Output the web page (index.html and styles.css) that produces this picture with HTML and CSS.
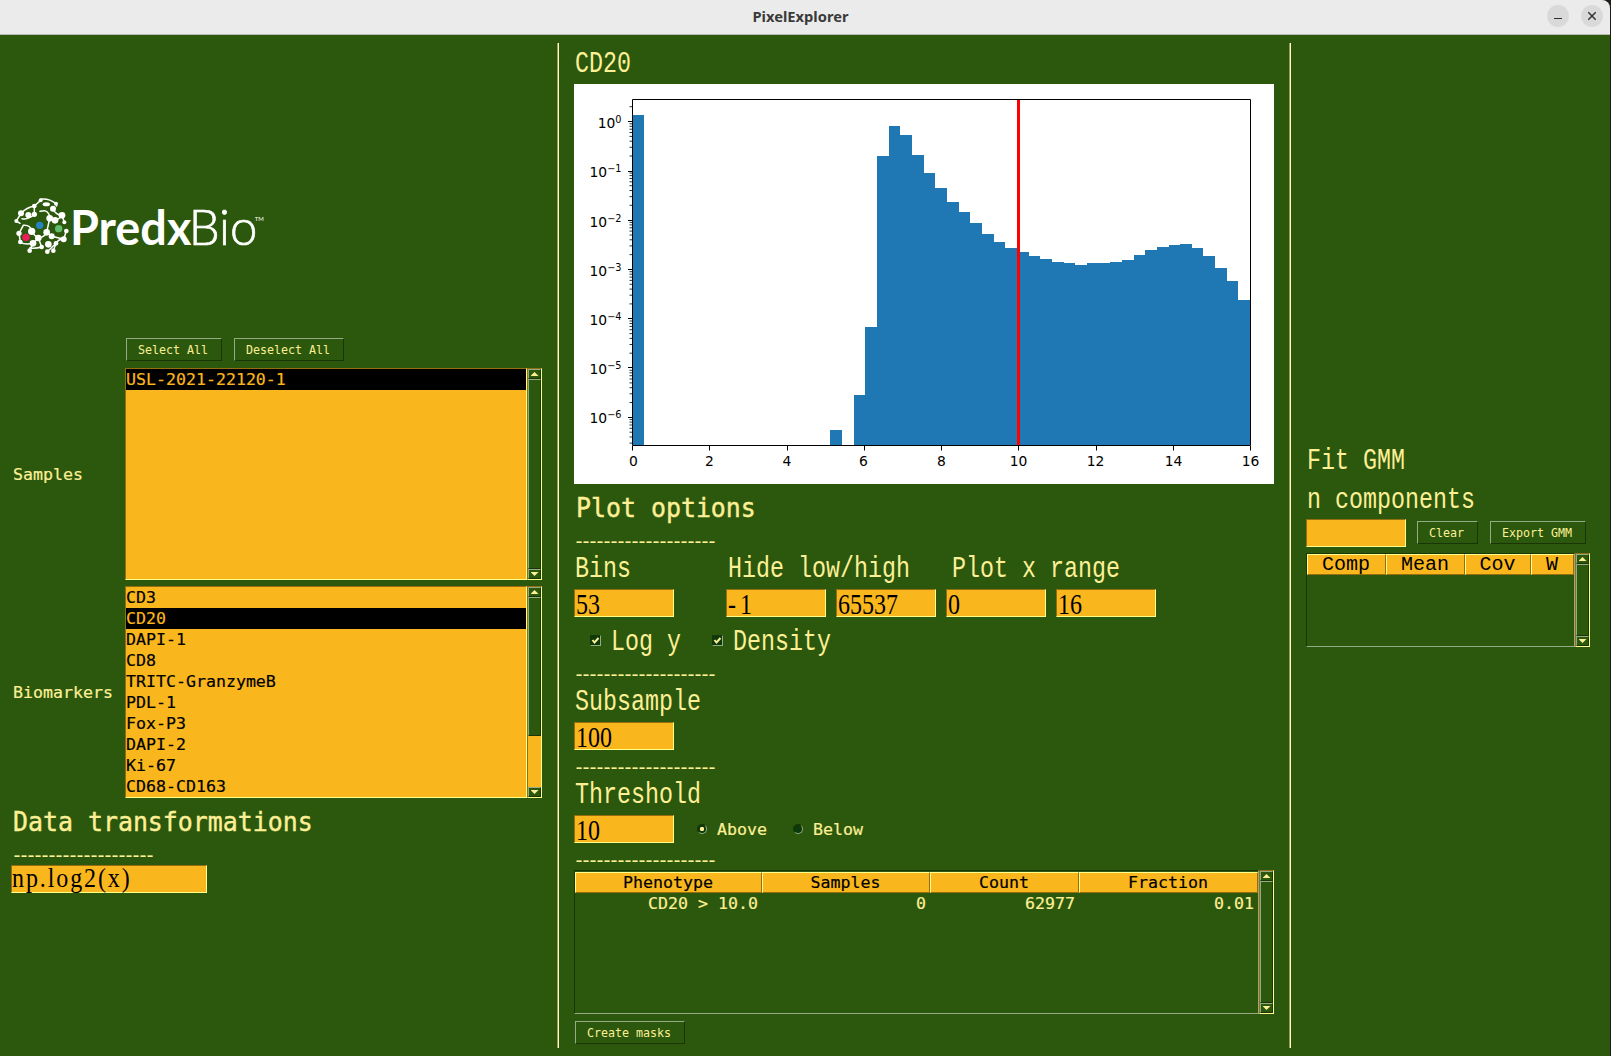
FILE: index.html
```html
<!DOCTYPE html>
<html lang="en">
<head>
<meta charset="utf-8">
<title>PixelExplorer</title>
<link rel="stylesheet" href="styles.css">
</head>
<body>
<div class="window">
  <header class="titlebar">
    <span class="caption">PixelExplorer</span>
    <div class="controls">
      <svg width="22" height="22" viewBox="0 0 22 22"><circle cx="11" cy="11" r="11" fill="#d9d9d9"/><path d="M7 13.5h8" stroke="#2e2e2e" fill="none"/></svg>
      <svg width="22" height="22" viewBox="0 0 22 22"><circle cx="11" cy="11" r="11" fill="#d9d9d9"/><path d="M7.3 7.3l7.4 7.4M14.7 7.3l-7.4 7.4" stroke="#2e2e2e" stroke-width="1.4" fill="none"/></svg>
    </div>
  </header>
  <main class="content">
    <section class="panel left">
      <svg class="logo" width="260" height="90" viewBox="33 0 780 270">
        <g fill="none" stroke="#fff" stroke-width="4.500" stroke-linecap="round">
          <path d="M103 78L122 61M122 58Q145 54 168 71M168 71L170 78M103 78Q80 82 63 100L49 123M103 78L103 103M159 86Q166 104 186 106L193 127M149 115Q150 98 134 92L120 94M149 115Q156 124 165 121Q180 116 186 106M95 154Q92 134 70 136L57 160M49 123L60 130M103 103Q86 120 66 116M57 160L61 186Q74 196 99 190L115 174M95 154Q104 168 115 174Q134 172 140 157Q144 138 149 115M199 153L191 178Q176 176 168 190L160 212M155 169L140 157M155 169Q168 172 191 178M99 190L89 212M115 174L125 201M125 201Q108 206 89 204M168 190L142 215"/>
        </g>
        <g fill="#fff">
          <circle cx="122" cy="61" r="6"/><ellipse cx="139" cy="73" rx="11" ry="6"/><circle cx="168" cy="71" r="6"/><circle cx="103" cy="78" r="7"/>
          <circle cx="159" cy="86" r="9"/><circle cx="186" cy="106" r="10"/><circle cx="63" cy="100" r="9"/><circle cx="85" cy="105" r="9"/>
          <circle cx="49" cy="123" r="6"/><circle cx="103" cy="103" r="8"/><circle cx="149" cy="115" r="10"/><circle cx="165" cy="121" r="10"/><circle cx="193" cy="127" r="6"/>
          <circle cx="95" cy="154" r="11"/><circle cx="57" cy="160" r="8"/><circle cx="140" cy="157" r="10"/><circle cx="199" cy="153" r="7"/>
          <circle cx="155" cy="169" r="9"/><circle cx="115" cy="174" r="10"/><circle cx="191" cy="178" r="9"/><circle cx="61" cy="186" r="7"/>
          <circle cx="99" cy="190" r="10"/><circle cx="145" cy="193" r="10"/><circle cx="168" cy="190" r="7"/><circle cx="89" cy="212" r="7"/>
          <circle cx="125" cy="201" r="7"/><circle cx="160" cy="212" r="7"/><circle cx="142" cy="215" r="7"/>
        </g>
        <circle cx="119" cy="136" r="11" fill="#2484c6"/>
        <circle cx="176" cy="146" r="11" fill="#62bd6d"/>
        <circle cx="78" cy="172" r="11" fill="#ed1c5b"/>
        <text class="logo-bold" x="210" y="196" textLength="364" lengthAdjust="spacingAndGlyphs">Predx</text>
        <text class="logo-light" x="566" y="196" textLength="206" lengthAdjust="spacingAndGlyphs">Bio</text>
        <text class="logo-tm" x="764" y="124">TM</text>
      </svg>
      <div class="select-row">
        <button class="btn w96">Select All</button>
        <button class="btn w110">Deselect All</button>
      </div>
      <div class="list-row">
        <span class="label">Samples</span>
        <ul class="listbox"><li class="on">USL-2021-22120-1</li></ul>
        <div class="scroll"><i class="up"></i><b class="full"></b><i class="down"></i></div>
      </div>
      <div class="list-row second">
        <span class="label">Biomarkers</span>
        <ul class="listbox">
          <li>CD3</li><li class="on">CD20</li><li>DAPI-1</li><li>CD8</li><li>TRITC-GranzymeB</li>
          <li>PDL-1</li><li>Fox-P3</li><li>DAPI-2</li><li>Ki-67</li><li>CD68-CD163</li>
        </ul>
        <div class="scroll"><i class="up"></i><b class="part"></b><i class="down"></i></div>
      </div>
      <h2 class="title data">Data transformations</h2>
      <div class="dashes data-dash">--------------------</div>
      <div class="entry formula"><span>np.log2(x)</span></div>
    </section>

    <div class="vsep"></div>

    <section class="panel center">
      <div class="big plot-name">CD20</div>
      <svg class="plot" width="700" height="400" viewBox="0 0 700 400">
        <rect width="700" height="400" fill="#fff"/>
        <path shape-rendering="crispEdges" fill="#1f77b4" d="M59 361V31H70V361ZM256 361V346H268V361ZM280 361V311H291V243H303V72H315V42H326V51H338V71H350V89H361V104H373V118H385V128H396V139H408V150H420V158H431V164H443V168H455V172H466V175H478V178H490V179H501V181H513V179H536V178H548V176H560V171H571V166H583V163H595V161H606V160H618V164H629V172H641V184H653V197H664V216H676V361Z"/>
        <path d="M444.5 16V361" stroke="#f00" stroke-width="3" shape-rendering="crispEdges"/>
        <path stroke="#000" fill="none" d="M58.5 15.5H676.5V361.5H58.5ZM58.5 362v4.500M135.500 362v4.500M213.500 362v4.500M290.500 362v4.500M367.500 362v4.500M444.500 362v4.500M522.500 362v4.500M599.500 362v4.500M676.500 362v4.500M54 37.500h4.500M54 87.500h4.500M54 136.500h4.500M54 185.500h4.500M54 234.500h4.500M54 283.500h4.500M54 333.500h4.500"/>
        <path id="minor" stroke="#000" stroke-width=".8" fill="none" d="M55.500 39.800h3M55.500 42.300h3M55.500 45.200h3M55.500 48.500h3M55.500 52.400h3M55.500 57.200h3M55.500 63.300h3M55.500 72h3"/>
        <use href="#minor" y="49.300"/><use href="#minor" y="98.600"/><use href="#minor" y="147.900"/><use href="#minor" y="197.200"/><use href="#minor" y="246.500"/>
        <path stroke="#000" stroke-width=".8" d="M55.500 22.700h3M55.500 335.600h3M55.500 338.100h3M55.500 341h3M55.500 344.300h3M55.500 348.200h3M55.500 353h3M55.500 359.100h3"/>
        <g class="xt">
          <text x="59.500" y="382">0</text><text x="135.500" y="382">2</text><text x="213" y="382">4</text><text x="289.500" y="382">6</text><text x="367.500" y="382">8</text><text x="444.500" y="382">10</text><text x="521.500" y="382">12</text><text x="599.500" y="382">14</text><text x="676.500" y="382">16</text>
        </g>
        <g class="yt">
          <text x="47.500" y="44">10<tspan class="sup" dy="-5.500">0</tspan></text>
          <text x="47.500" y="93">10<tspan class="sup" dy="-5.500">−1</tspan></text>
          <text x="47.500" y="143">10<tspan class="sup" dy="-5.500">−2</tspan></text>
          <text x="47.500" y="192">10<tspan class="sup" dy="-5.500">−3</tspan></text>
          <text x="47.500" y="241">10<tspan class="sup" dy="-5.500">−4</tspan></text>
          <text x="47.500" y="290">10<tspan class="sup" dy="-5.500">−5</tspan></text>
          <text x="47.500" y="339">10<tspan class="sup" dy="-5.500">−6</tspan></text>
        </g>
      </svg>
      <h2 class="title options">Plot options</h2>
      <div class="dashes first">--------------------</div>
      <div class="labels"><span class="big c1">Bins</span><span class="big c2">Hide low/high</span><span class="big">Plot x range</span></div>
      <div class="entries">
        <div class="entry gap"><span>53</span></div><div class="entry minus"><span>-1</span></div><div class="entry"><span>65537</span></div><div class="entry"><span>0</span></div><div class="entry"><span>16</span></div>
      </div>
      <div class="checks">
        <span class="check"><svg width="11" height="11" viewBox="0 0 11 11"><path d="M2.500 5l2 2.500L8.500 3" fill="none" stroke="#fdef96" stroke-width="2"/></svg></span><span class="big logy">Log y</span>
        <span class="check"><svg width="11" height="11" viewBox="0 0 11 11"><path d="M2.500 5l2 2.500L8.500 3" fill="none" stroke="#fdef96" stroke-width="2"/></svg></span><span class="big">Density</span>
      </div>
      <div class="dashes">--------------------</div>
      <div class="big field">Subsample</div>
      <div class="entry"><span>100</span></div>
      <div class="dashes">--------------------</div>
      <div class="big field">Threshold</div>
      <div class="threshold">
        <div class="entry"><span>10</span></div>
        <span class="radio picked"></span><span class="label above">Above</span>
        <span class="radio"></span><span class="label">Below</span>
      </div>
      <div class="dashes">--------------------</div>
      <div class="table-wrap pheno">
        <div class="table">
          <div class="row head"><span>Phenotype</span><span>Samples</span><span>Count</span><span>Fraction</span></div>
          <div class="row"><span>CD20 &gt; 10.0</span><span>0</span><span>62977</span><span>0.01</span></div>
        </div>
        <div class="scroll"><i class="up"></i><b class="full"></b><i class="down"></i></div>
      </div>
      <button class="btn w110 masks">Create masks</button>
    </section>

    <div class="vsep"></div>

    <section class="panel right">
      <div class="big fit">Fit GMM</div>
      <div class="big ncomp">n components</div>
      <div class="gmm-row">
        <div class="entry"></div>
        <button class="btn w61">Clear</button>
        <button class="btn w96">Export GMM</button>
      </div>
      <div class="table-wrap gmm">
        <div class="table">
          <div class="row head"><span>Comp</span><span>Mean</span><span>Cov</span><span>W</span></div>
        </div>
        <div class="scroll"><i class="up"></i><b class="full"></b><i class="down"></i></div>
      </div>
    </section>
  </main>
</div>
</body>
</html>
```
FILE: styles.css
```css
* { box-sizing: border-box; }
:root {
  --green: #2b580c;
  --amber: #f9b71d;
  --cream: #fdef96;
  --amber-dark: #956e11;
  --amber-light: #ffff8c;
  --green-dark: #1a3507;
  --green-light: #95ab85;
}
body {
  margin: 0;
  width: 1611px;
  height: 1056px;
  overflow: hidden;
  background: #1c1c1c;
  color: var(--cream);
}
.window { width: 1610px; height: 1056px; display: flex; flex-direction: column; background: var(--green); border-top-right-radius: 8px; overflow: hidden; }

.titlebar { height: 35px; flex: none; display: flex; align-items: center; justify-content: flex-end; background: #ebebeb; border-bottom: 1px solid #b9b9b4; }
.caption { flex: 1; padding: 0 0 2px 124px; text-align: center; font: bold 14.700px/32px "Noto Sans", sans-serif; color: #3a3a3a; }
.controls { width: 133px; padding-right: 7px; display: flex; gap: 12px; justify-content: flex-end; margin-bottom: 2px; }
.controls svg { display: block; }

.content { flex: 1; display: flex; }
.panel { display: flex; flex-direction: column; align-items: flex-start; flex: none; }
.left { width: 557px; padding: 145px 0 0 11px; }
.center { width: 730px; padding: 14px 0 0 15px; }
.right { flex: 1; padding: 411px 0 0 15px; }
.vsep { width: 2px; flex: none; height: 1005px; margin-top: 8px; border-left: 1px solid #a09a55; background: #ffffc8; }

.big { display: block; height: 30px; padding-left: 1px; font: 23.330px/30px "Liberation Mono", monospace; white-space: pre; transform: scaleY(1.28); }
.title { margin: 0; height: 30px; font: 24.900px/33px "DejaVu Sans Mono", monospace; white-space: pre; -webkit-text-stroke: .4px; transform: scaleY(1.1); }
.label { font: 16.600px/21px "DejaVu Sans Mono", monospace; white-space: pre; -webkit-text-stroke: .2px; }
.dashes { height: 16px; margin: 9px 0 0 -1px; font: 20px/17px "DejaVu Sans Mono", monospace; letter-spacing: -5.040px; white-space: pre; }

.btn { height: 23px; padding: 0 2px 0 0; border: 1px solid; border-color: var(--green-light) var(--green-dark) var(--green-dark) var(--green-light); background: var(--green); color: var(--cream); font: 11.670px/20px "DejaVu Sans Mono", monospace; text-align: center; white-space: pre; }
.w61 { width: 61px; }
.w96 { width: 96px; }
.w110 { width: 110px; }

.entry { width: 100px; height: 28px; flex: none; padding-left: 1px; border: 1px solid; border-color: var(--amber-dark) var(--amber-light) var(--amber-light) var(--amber-dark); background: var(--amber); color: #000; font: 24px/26px "Liberation Serif", serif; white-space: pre; }
.entry span { display: block; transform: scaleY(1.25); transform-origin: 50% 38%; }
.entry.minus { letter-spacing: 4px; }
.formula { width: 196px; margin-top: 2px; padding-left: 0; letter-spacing: 1.900px; line-height: 24px; }
.formula span { transform: scaleY(1.13); }

.logo { display: block; }
.logo text { fill: #fff; font-family: Lato, sans-serif; }
.logo .logo-bold { font-size: 142px; font-weight: 700; }
.logo .logo-light { font-size: 148px; font-weight: 300; stroke: #fff; stroke-width: 2; }
.logo .logo-tm { font-size: 18px; }
.select-row { display: flex; gap: 12px; margin: 68px 0 0 115px; }
.list-row { display: flex; height: 212px; margin-top: 7px; align-items: center; }
.list-row.second { margin-top: 6px; }
.list-row .label { width: 114px; padding-left: 2px; }
.listbox { width: 402px; height: 212px; margin: 0; padding: 0; list-style: none; background: var(--amber); border: 1px solid; border-color: var(--amber-dark) var(--amber-light) var(--amber-light) var(--amber-dark); color: #000; font: 16.600px/21px "DejaVu Sans Mono", monospace; -webkit-text-stroke: .2px; }
.listbox li { height: 21px; white-space: pre; }
.listbox .on { background: #000; color: var(--amber); }

.scroll { width: 15px; height: 100%; flex: none; display: flex; flex-direction: column; background: var(--amber); border: 1px solid; border-color: var(--amber-dark) var(--amber-light) var(--amber-light) var(--amber-dark); }
.scroll i, .scroll b { display: block; background: var(--green); border: 1px solid; border-color: var(--green-light) var(--green-dark) var(--green-dark) var(--green-light); }
.scroll i { height: 10px; flex: none; }
.scroll i::before { content: ""; display: block; width: 8px; height: 4px; margin: 2px auto 0; background: var(--cream); clip-path: polygon(50% 0, 100% 100%, 0 100%); }
.scroll .down { margin-top: auto; }
.scroll .down::before { clip-path: polygon(0 0, 100% 0, 50% 100%); }
.scroll .full { flex: 1; }
.scroll .part { height: 139px; }

.data { margin-top: 7px; padding-left: 2px; }
.dashes.data-dash { margin-top: 12px; padding-left: 1px; }

.plot { display: block; margin-top: 5px; font-family: "DejaVu Sans", sans-serif; font-size: 13.890px; }
.xt { text-anchor: middle; }
.yt { text-anchor: end; }
.sup { font-size: 9.720px; }
.options { margin-top: 7px; padding-left: 2px; }
.dashes.first { margin-top: 12px; }
.labels { display: flex; margin-top: 5px; }
.c1 { width: 153px; }
.c2 { width: 224px; }
.entries { display: flex; gap: 10px; margin-top: 5px; }
.gap { margin-right: 42px; }
.checks { display: flex; margin: 10px 0 0 16px; height: 30px; }
.check { width: 11px; height: 11px; margin: 8px 10px 0 0; background: #0c3a0a; border: 1px solid; border-color: var(--green-dark) var(--green-light) var(--green-light) var(--green-dark); }
.check svg { display: block; margin: -1px; }
.checks .big { padding-left: 0; }
.logy { width: 101px; }
.field { margin: 5px 0; }
.threshold { display: flex; align-items: center; }
.radio { width: 10px; height: 10px; margin: 0 10px 0 23px; border-radius: 50%; background: #0c3a0a; border: 1px solid; border-color: var(--green-dark) var(--green-light) var(--green-light) var(--green-dark); }
.picked { background: radial-gradient(circle, var(--cream) 0 2px, #0c3a0a 2.300px); }
.above { width: 53px; }

.table-wrap { display: flex; }
.pheno { height: 144px; margin-top: 2px; }
.table { border: 1px solid; border-color: var(--green-dark) var(--green-light) var(--green-light) var(--green-dark); height: 100%; }
.row { display: grid; height: 21px; font: 16.600px/21px "DejaVu Sans Mono", monospace; text-align: right; -webkit-text-stroke: .2px; }
.row span { padding-right: 4px; white-space: pre; }
.head { color: #000; text-align: center; }
.head span { padding: 0 1px 0 0; background: var(--amber); border: 1px solid; border-color: var(--amber-light) var(--amber-dark) var(--amber-dark) var(--amber-light); line-height: 19px; }
.pheno .table { width: 685px; padding-top: 1px; }
.pheno .row { grid-template-columns: 187px 168px 149px 179px; }
.masks { margin: 7px 0 0 1px; }

.ncomp { margin-top: 9px; }
.gmm-row { display: flex; align-items: flex-start; margin-top: 4px; }
.gmm-row .btn { margin: 2px 0 0 11px; }
.gmm-row .btn + .btn { margin-left: 12px; }
.gmm { height: 94px; margin-top: 6px; }
.gmm .table { width: 269px; }
.gmm .row { grid-template-columns: 79px 79px 66px 43px; height: 20px; font: 20px/18px "Liberation Mono", monospace; -webkit-text-stroke: 0; }
.gmm .head span { line-height: 19px; }
```
